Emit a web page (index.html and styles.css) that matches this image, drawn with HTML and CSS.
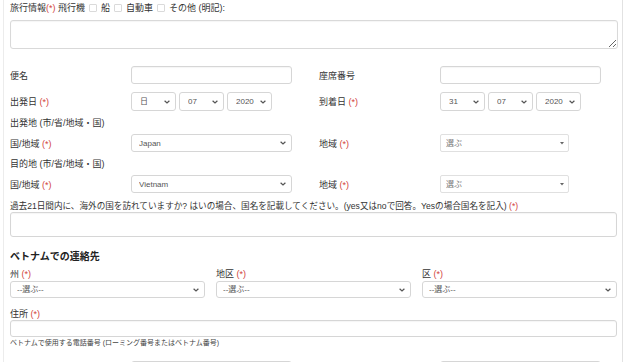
FILE: index.html
```html
<!DOCTYPE html>
<html lang="ja">
<head>
<meta charset="UTF-8">
<meta name="viewport" content="width=device-width, initial-scale=1.0">
<title>旅行情報</title>
<link rel="stylesheet" href="styles.css">
</head>
<body>
<div class="panel">
    <div class="travel">
        旅行情報<span class="req">(*)</span> 飛行機 <input type="checkbox" class="cb"> 船 <input type="checkbox" class="cb"> 自動車 <input type="checkbox" class="cb"> その他 (明記):
    </div>
    <textarea class="area"></textarea>

    <div class="row r-flight">
        <label>便名</label>
        <input type="text" class="field half">
        <label>座席番号</label>
        <input type="text" class="field half">
    </div>

    <div class="row r-date">
        <label>出発日 <span class="req">(*)</span></label>
        <div class="dates">
            <select class="sel day"><option>日</option></select>
            <select class="sel day"><option>07</option></select>
            <select class="sel day"><option>2020</option></select>
        </div>
        <label>到着日 <span class="req">(*)</span></label>
        <div class="dates">
            <select class="sel day"><option>31</option></select>
            <select class="sel day"><option>07</option></select>
            <select class="sel day"><option>2020</option></select>
        </div>
    </div>

    <div class="sub">出発地 (市/省/地域・国)</div>
    <div class="row r-place">
        <label>国/地域 <span class="req">(*)</span></label>
        <select class="sel half"><option>Japan</option></select>
        <label>地域 <span class="req">(*)</span></label>
        <select class="pick"><option>選ぶ</option></select>
    </div>

    <div class="sub sub2">目的地 (市/省/地域・国)</div>
    <div class="row r-place2">
        <label>国/地域 <span class="req">(*)</span></label>
        <select class="sel half"><option>Vietnam</option></select>
        <label>地域 <span class="req">(*)</span></label>
        <select class="pick"><option>選ぶ</option></select>
    </div>

    <div class="question">過去21日間内に、海外の国を訪れていますか? はいの場合、国名を記載してください。(yes又はnoで回答。Yesの場合国名を記入) <span class="req">(*)</span></div>
    <input type="text" class="field full q-field">

    <h3 class="contact">ベトナムでの連絡先</h3>
    <div class="trio">
        <div class="col">
            <label>州 <span class="req">(*)</span></label>
            <select class="sel full"><option>--選ぶ--</option></select>
        </div>
        <div class="col">
            <label>地区 <span class="req">(*)</span></label>
            <select class="sel full"><option>--選ぶ--</option></select>
        </div>
        <div class="col">
            <label>区 <span class="req">(*)</span></label>
            <select class="sel full"><option>--選ぶ--</option></select>
        </div>
    </div>

    <div class="addr">住所 <span class="req">(*)</span></div>
    <input type="text" class="field full addr-field">

    <div class="phone">ベトナムで使用する電話番号 (ローミング番号またはベトナム番号)</div>
    <div class="row r-phone">
        <span></span>
        <input type="text" class="field half">
        <span></span>
        <input type="text" class="field half">
    </div>
</div>
</body>
</html>
```

FILE: styles.css
```css
*{margin: 0; padding: 0; box-sizing: border-box;}
html, body{overflow: hidden;}
body{
    font-family: "Liberation Sans", Arial, "Noto Sans CJK JP", sans-serif;
    font-size: 9px;
    color: #333;
    background: #fff;
}
.panel{
    margin: 0 1px 0 3px;
    padding: 3px 5px 0 6px;
    border-left: 1px solid #ececec;
    border-right: 1px solid #e2e2e2;
    min-height: 400px;
}
.req{color: #d2423d;}
label{display: block;}

.travel{line-height: 10px; height: 10px;}
.cb{
    -webkit-appearance: none;
    appearance: none;
    width: 8px;
    height: 8px;
    border: 1px solid #dadada;
    border-radius: 1px;
    vertical-align: -1px;
    margin: 0 2px 0 1px;
}
.area{
    display: block;
    width: 608px;
    height: 29px;
    margin-top: 7px;
    border: 1px solid #d9d9d9;
    border-radius: 3px;
    box-shadow: inset 0 1px 1px rgba(0,0,0,.04);
}

.field{
    display: block;
    height: 18px;
    border: 1px solid #d6d6d6;
    border-radius: 3px;
    box-shadow: inset 0 1px 1px rgba(0,0,0,.04);
    background: #fff;
}
.half{width: 161px;}
.full{width: 100%;}

.row{
    display: grid;
    grid-template-columns: 121px 188px 121px 1fr;
    align-items: center;
}
.r-flight{margin-top: 17px;}
.r-date{margin-top: 8px;}
.r-place{margin-top: 5px;}
.r-place2{margin-top: 5px;}

.sel{
    -webkit-appearance: none;
    appearance: none;
    display: block;
    height: 18px;
    padding: 0 12px 0 7px;
    font-family: inherit;
    font-size: 8px;
    color: #555;
    border: 1px solid #d6d6d6;
    border-radius: 3px;
    background: #fff url("data:image/svg+xml,%3Csvg xmlns='http://www.w3.org/2000/svg' width='6' height='4' viewBox='0 0 6 4'%3E%3Cpath d='M0.6 0.7 L3 3 L5.4 0.7' fill='none' stroke='%23555' stroke-width='1.2'/%3E%3C/svg%3E") no-repeat right 5px center;
}
.dates{display: flex; gap: 3px;}
.day{width: 45px; height: 19px; padding-left: 8px;}
.pick{
    -webkit-appearance: none;
    appearance: none;
    display: block;
    width: 129px;
    height: 18px;
    padding: 0 10px 0 5px;
    font-family: inherit;
    font-size: 8px;
    color: #777;
    border: 1px solid #e0e0e0;
    border-radius: 2px;
    background: #fff url("data:image/svg+xml,%3Csvg xmlns='http://www.w3.org/2000/svg' width='4' height='3' viewBox='0 0 4 3'%3E%3Cpath d='M0 0 H4 L2 2.5 Z' fill='%23666'/%3E%3C/svg%3E") no-repeat right 4px center;
}

.sub{margin-top: 6px; line-height: 12px;}
.sub2{margin-top: 6px;}

.question{margin-top: 7px; line-height: 12px; font-size: 8.6px;}
.q-field{height: 25px;}

.contact{
    margin-top: 13px;
    font-size: 10px;
    line-height: 13px;
    font-weight: bold;
    color: #222;
}
.trio{
    display: grid;
    grid-template-columns: repeat(3, 1fr);
    column-gap: 11px;
    margin-top: 5px;
}
.col label{line-height: 12px; margin-bottom: 1px;}
.col .sel{height: 17px; padding-left: 6px;}

.addr{margin-top: 10px; line-height: 12px;}
.addr-field{height: 17px;}

.phone{
    margin-top: 1px;
    font-size: 7px;
    line-height: 10px;
    color: #444;
}
.r-phone{margin-top: 13px;}
```
